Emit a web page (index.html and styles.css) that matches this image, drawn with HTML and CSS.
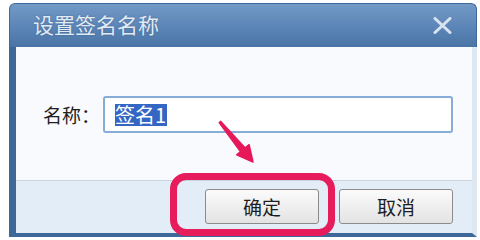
FILE: index.html
```html
<!DOCTYPE html>
<html lang="zh-CN">
<head>
    <meta charset="UTF-8">
    <meta name="viewport" content="width=device-width, initial-scale=1.0">
    <title>设置签名名称</title>
    <link rel="stylesheet" href="styles.css">
</head>
<body>

    <div class="window">
        <div class="titlebar">
            <span class="title">设置签名名称</span>
            <svg class="close" width="19" height="17" viewBox="0 0 19 17">
                <path d="M2 1.5 L17 15.5 M17 1.5 L2 15.5" stroke="#d9e3ef" stroke-width="3" stroke-linecap="round"/>
            </svg>
        </div>
        <div class="frame">
            <div class="form">
                <label class="label">名称：</label>
                <div class="field"><span class="selected">签名1</span></div>
            </div>
            <div class="footer">
                <button class="btn">确定</button>
                <button class="btn">取消</button>
            </div>
        </div>
    </div>

    <!-- 标注 -->
    <div class="highlight"></div>
    <svg class="arrow" width="55" height="55" viewBox="0 0 55 55">
        <polygon points="10.8,6.4 35.2,32.9 39.1,29.7 43,47 26.7,39.9 30.6,36.7 9.2,7.6" fill="#e6185a" stroke="#e6185a" stroke-width="1.5" stroke-linejoin="round"/>
    </svg>

</body>
</html>
```

FILE: styles.css
```css
body {
    margin: 0;
    background-color: #ffffff;
    font-family: "Noto Sans CJK SC", "Noto Sans", sans-serif;
    color: #1e1e1e;
}

.window {
    margin: 3px 0 0 9px;
    width: 468px;
}

.titlebar {
    height: 44px;
    box-sizing: border-box;
    padding: 0 24px 4px 23px;
    display: flex;
    align-items: center;
    justify-content: space-between;
    border-radius: 6px 6px 0 0;
    background: linear-gradient(#7399c5, #5b85b7 55%, #4a74a6);
    border: 1px solid #3e6897;
    border-bottom: none;
}

.title {
    font-size: 21px;
    line-height: 24px;
    color: #e2eaf4;
    text-shadow: 0 0 2px rgba(40, 70, 110, 0.5);
}

.close {
    display: block;
    margin-top: 4px;
}

.frame {
    border-left: 7px solid #3d6898;
    border-right: 5px solid #dfe7f0;
    border-bottom: 4px solid #3d6898;
}

.form {
    height: 133px;
    box-sizing: border-box;
    padding: 49px 0 0 27px;
    display: flex;
    align-items: flex-start;
    background-color: #f8fafd;
}

.label {
    width: 60px;
    font-size: 19px;
    line-height: 37px;
}

.field {
    width: 350px;
    height: 37px;
    box-sizing: border-box;
    padding-left: 10px;
    display: flex;
    align-items: center;
    border: 2px solid #87acd8;
    border-radius: 3px;
    background-color: #ffffff;
}

.selected {
    background-color: #3467c3;
    color: #ffffff;
    font-size: 20px;
    line-height: 22px;
    padding-right: 1px;
}

.footer {
    height: 53px;
    box-sizing: border-box;
    padding: 8px 19px 0 0;
    display: flex;
    justify-content: flex-end;
    gap: 20px;
    border-top: 1px solid #c8d4e1;
    background-color: #e3edf7;
}

.btn {
    width: 114px;
    height: 35px;
    padding: 0;
    border: 1px solid #8b8b8b;
    border-radius: 3px;
    background: linear-gradient(#fbfbfb, #e3e3e3);
    font-family: inherit;
    font-size: 19px;
    color: #1e1e1e;
}

.highlight {
    position: absolute;
    left: 170px;
    top: 173px;
    width: 165px;
    height: 63px;
    box-sizing: border-box;
    border: 7px solid #e61c5d;
    border-radius: 16px;
}

.arrow {
    position: absolute;
    left: 210px;
    top: 115px;
}
```
